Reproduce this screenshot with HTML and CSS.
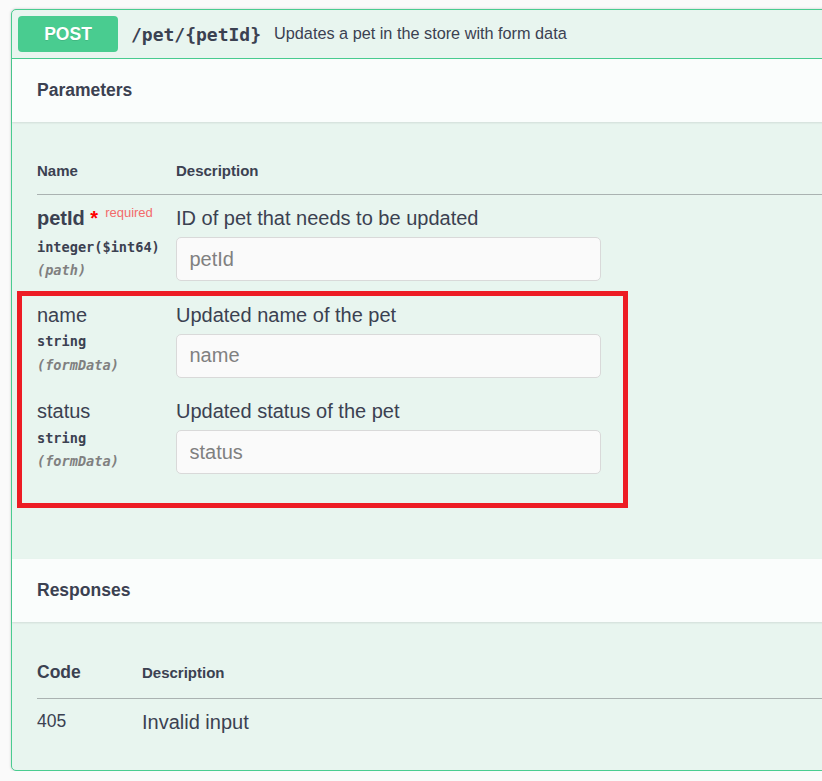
FILE: index.html
```html
<!DOCTYPE html>
<html>
<head>
<meta charset="utf-8">
<link rel="stylesheet" href="styles.css">
</head>
<body>
<div class="opblock">
  <div class="summary">
    <span class="method">POST</span>
    <span class="path">/pet/{petId}</span>
    <span class="summary-desc">Updates a pet in the store with form data</span>
  </div>
  <div class="section-header"><h4>Parameters</h4></div>
  <div class="table-container">
    <table class="params">
      <thead>
        <tr><th class="col-name">Name</th><th>Description</th></tr>
      </thead>
      <tbody>
        <tr>
          <td class="col-name">
            <div class="param-name required">petId<span class="star">&nbsp;*</span><span class="req">required</span></div>
            <div class="param-type">integer($int64)</div>
            <div class="param-in">(path)</div>
          </td>
          <td>
            <div class="param-desc">ID of pet that needs to be updated</div>
            <input class="param-input" type="text" placeholder="petId">
          </td>
        </tr>
        <tr>
          <td class="col-name">
            <div class="param-name">name</div>
            <div class="param-type">string</div>
            <div class="param-in">(formData)</div>
          </td>
          <td>
            <div class="param-desc">Updated name of the pet</div>
            <input class="param-input" type="text" placeholder="name">
          </td>
        </tr>
        <tr>
          <td class="col-name">
            <div class="param-name">status</div>
            <div class="param-type">string</div>
            <div class="param-in">(formData)</div>
          </td>
          <td>
            <div class="param-desc">Updated status of the pet</div>
            <input class="param-input" type="text" placeholder="status">
          </td>
        </tr>
      </tbody>
    </table>
  </div>
  <div class="execute-wrapper"></div>
  <div class="section-header"><h4>Responses</h4></div>
  <div class="table-container">
    <table class="responses">
      <thead>
        <tr><th class="col-code">Code</th><th class="col-rdesc">Description</th></tr>
      </thead>
      <tbody>
        <tr>
          <td class="code">405</td>
          <td class="rdesc">Invalid input</td>
        </tr>
      </tbody>
    </table>
  </div>
</div>
<div class="highlight"></div>
</body>
</html>
```
FILE: styles.css
```css
html, body {
  margin: 0;
  overflow: hidden;
}
body {
  padding: 9px 0 0 11px;
  background: #fafafa;
  font-family: "Liberation Sans", Arial, sans-serif;
  color: #3b4151;
}
.opblock {
  width: 880px;
  border: 1px solid #49cc90;
  border-radius: 5px;
  background: #e8f5ef;
  box-shadow: 0 0 3px rgba(0, 0, 0, 0.19);
}
.summary {
  display: flex;
  align-items: center;
  padding: 6px 6px 6px 6px;
  border-bottom: 1px solid #49cc90;
}
.method {
  width: 100px;
  height: 36px;
  display: flex;
  align-items: center;
  justify-content: center;
  background: #49cc90;
  color: #fff;
  font-weight: 700;
  font-size: 17.5px;
  border-radius: 4px;
  text-shadow: 0 1px 0 rgba(0, 0, 0, 0.1);
}
.path {
  font-family: "DejaVu Sans Mono", monospace;
  font-weight: 700;
  font-size: 18px;
  padding: 0 13px 0 13px;
}
.summary-desc {
  font-size: 16.25px;
  position: relative;
  top: -1px;
}
.section-header {
  height: 63px;
  box-sizing: border-box;
  padding: 0 25px;
  display: flex;
  align-items: center;
  background: #fafdfc;
  box-shadow: 0 1px 2px rgba(0, 0, 0, 0.1);
}
.section-header h4 {
  margin: 0;
  font-size: 17.5px;
  font-weight: 700;
}
.table-container {
  padding: 25px;
}
table {
  border-collapse: collapse;
  width: 100%;
}
th {
  text-align: left;
  font-size: 15px;
  font-weight: 700;
  line-height: 17px;
  padding: 15px 0;
  border-bottom: 1px solid #aab2b1;
}
td {
  vertical-align: top;
  padding: 12px 0 10.5px 0;
}
.params .col-name {
  width: 139px;
}
.param-name {
  font-size: 20px;
  line-height: 23px;
}
.param-name.required {
  font-weight: 700;
}
.star {
  color: red;
}
.req {
  font-weight: 400;
  font-size: 13px;
  color: #f36a6a;
  position: relative;
  top: -8px;
  padding-left: 7px;
}
.param-type {
  font-family: "DejaVu Sans Mono", monospace;
  font-weight: 700;
  font-size: 13.6px;
  line-height: 17.5px;
  padding: 6.5px 0 6.25px;
}
.param-in {
  font-family: "DejaVu Sans Mono", monospace;
  font-weight: 700;
  font-style: italic;
  font-size: 13.6px;
  line-height: 17.5px;
  color: #808080;
}
.param-desc {
  font-size: 20px;
  line-height: 23px;
}
.param-input {
  display: block;
  margin: 7px 0 0 0;
  width: 425px;
  height: 44px;
  box-sizing: border-box;
  padding: 0 12.5px;
  font-family: "Liberation Sans", Arial, sans-serif;
  font-size: 20px;
  color: #3b4151;
  background: #fafafa;
  border: 1px solid #d9d9d9;
  border-radius: 5px;
  outline: none;
}
.param-input::placeholder {
  color: #808080;
}
.execute-wrapper {
  height: 49px;
}
.responses th {
  vertical-align: baseline;
  line-height: 21px;
}
.responses .col-code {
  width: 105px;
  font-size: 17.5px;
}
.responses td {
  padding: 12.5px 0 10.5px 0;
}
.code {
  font-size: 17.5px;
}
.rdesc {
  font-size: 20px;
  line-height: 23px;
}
.highlight {
  position: absolute;
  left: 17px;
  top: 291px;
  width: 611px;
  height: 217px;
  box-sizing: border-box;
  border: 5px solid #ed1c24;
}
```
